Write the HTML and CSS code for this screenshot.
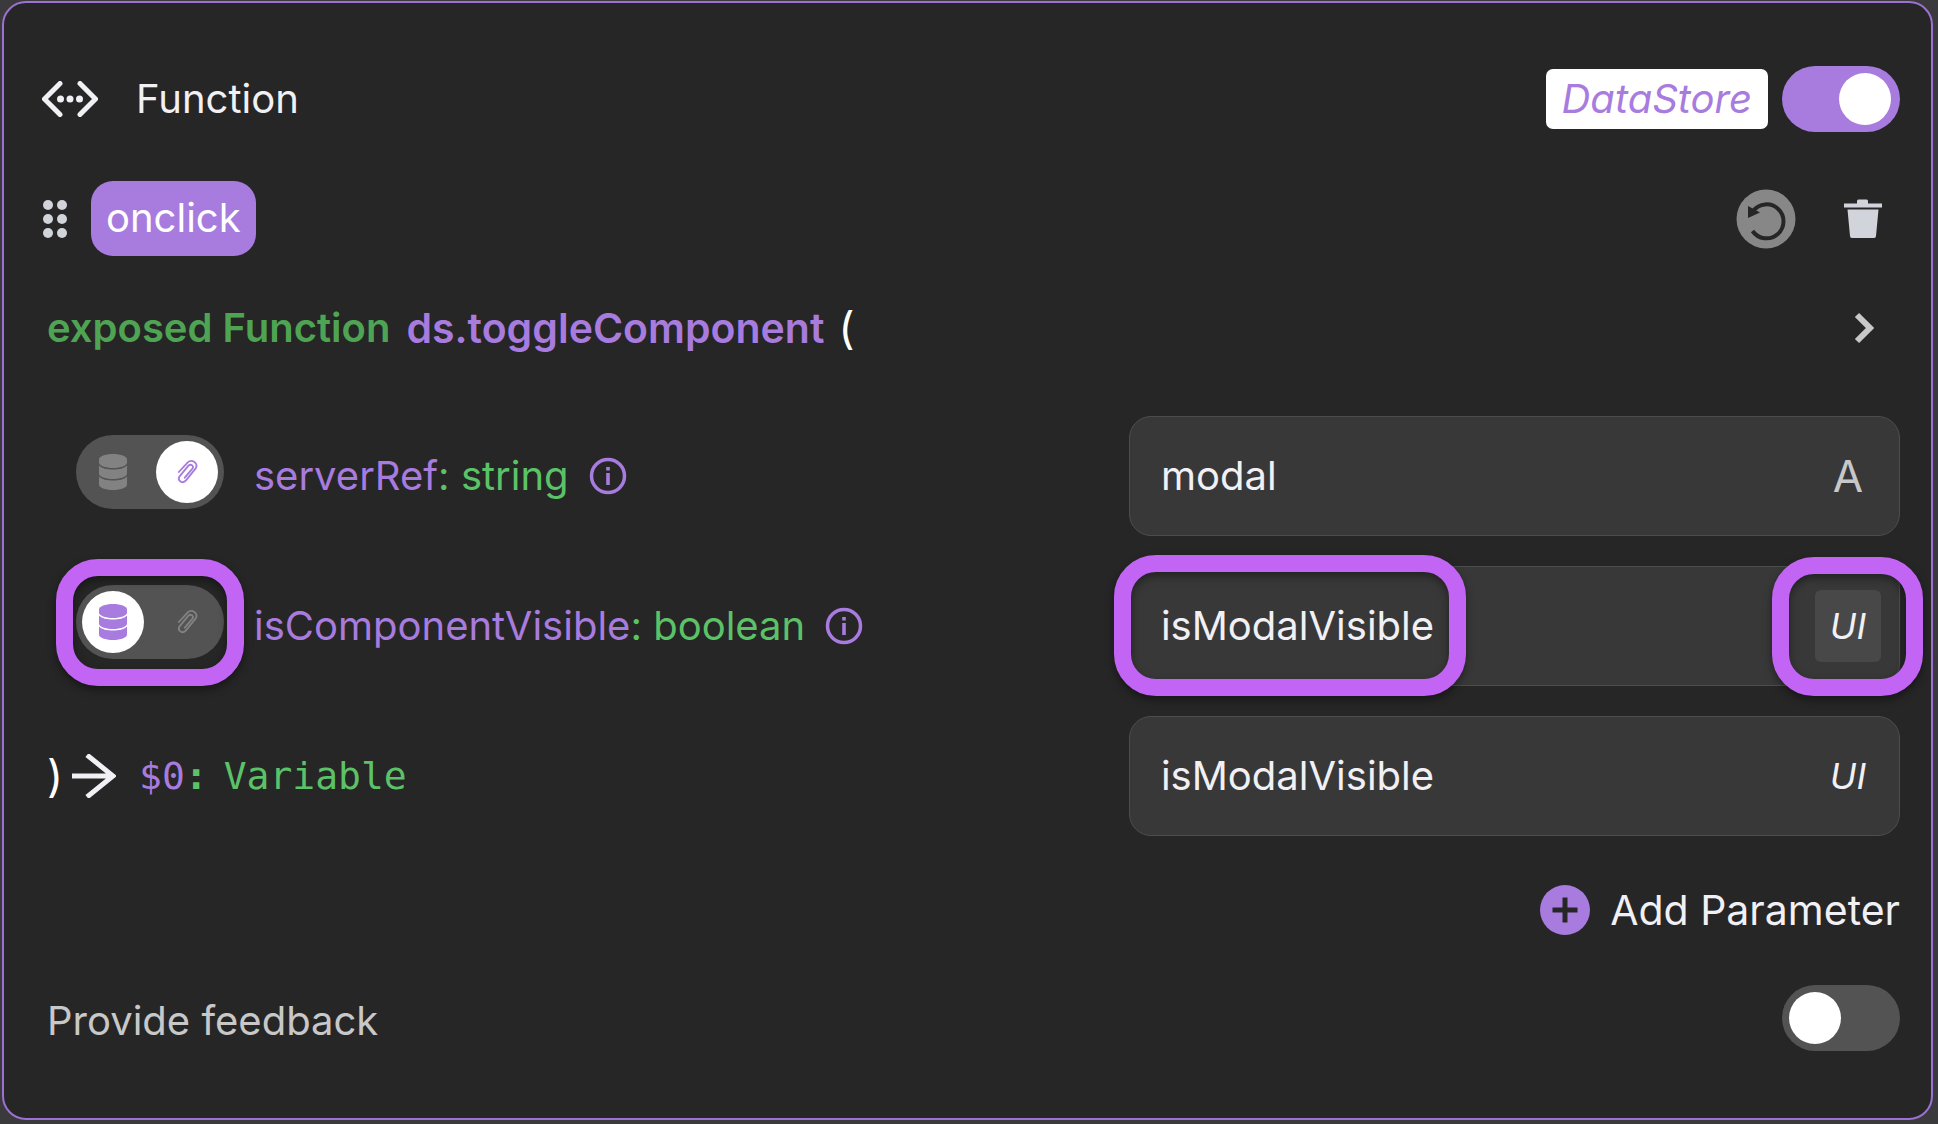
FILE: index.html
```html
<!DOCTYPE html>
<html lang="en">
<head>
<meta charset="utf-8">
<meta name="viewport" content="width=device-width, initial-scale=1">
<title>Function</title>
<link rel="stylesheet" href="styles.css">
</head>
<body>
<svg class="sprite" aria-hidden="true">
  <symbol id="database" viewBox="0 0 28 36">
    <path d="M14 0C6 0 0 2.400 0 5.500v3C0 11.600 6 14 14 14s14-2.400 14-5.500v-3C28 2.400 22 0 14 0z"/>
    <path d="M0 11.500v8C0 22.600 6 25 14 25s14-2.400 14-5.500v-8C25 14.500 20 15.500 14 15.500s-11-1-14-4z"/>
    <path d="M0 22.500v8C0 33.600 6 36 14 36s14-2.400 14-5.500v-8C25 25.500 20 26.500 14 26.500s-11-1-14-4z"/>
  </symbol>
  <symbol id="clip" viewBox="0 0 24 28">
    <path d="M2 14 11.500 3.800c4.500-4.600 12.500.7 8.700 6.600L9.800 23.200c-3.500 4.200-10 .4-7-4.500l9.700-11.600c2.500-2.500 6.300.3 4.300 3.200L8.500 20.200" fill="none" stroke="currentColor" stroke-width="2" stroke-linecap="round" stroke-linejoin="round"/>
  </symbol>
  <symbol id="info" viewBox="0 0 38 38">
    <circle cx="19" cy="19" r="16.500" fill="none" stroke="currentColor" stroke-width="3.500"/>
    <path d="M17.200 16h3.600v12h-3.600zM17.200 10h3.600v3.500h-3.600z"/>
  </symbol>
</svg>

<main class="panel">
  <header class="row">
    <svg class="icon-code" viewBox="0 0 56 36" aria-hidden="true">
      <path d="M18 2.500 2.500 18 18 33.500M38 2.500 53.500 18 38 33.500" fill="none" stroke="currentColor" stroke-width="5" stroke-linecap="round"/>
      <circle cx="18.500" cy="18" r="3.500"/><circle cx="28" cy="18" r="3.500"/><circle cx="37.500" cy="18" r="3.500"/>
    </svg>
    <h1 class="title">Function</h1>
    <label class="store-label push" for="store">DataStore</label>
    <input class="switch" type="checkbox" role="switch" id="store" checked>
  </header>

  <div class="row event">
    <svg class="icon-grip" viewBox="0 0 26 40" aria-hidden="true">
      <circle cx="6" cy="6" r="5"/><circle cx="20" cy="6" r="5"/>
      <circle cx="6" cy="20" r="5"/><circle cx="20" cy="20" r="5"/>
      <circle cx="6" cy="34" r="5"/><circle cx="20" cy="34" r="5"/>
    </svg>
    <span class="chip">onclick</span>
    <button class="icon-button push" type="button" aria-label="Reset">
      <svg class="icon-reset" viewBox="0 0 60 60" aria-hidden="true">
        <circle cx="30" cy="30" r="29.500" fill="#878787"/>
        <path d="M17 22A17 17 0 1 1 16.500 42" fill="none" stroke="#262626" stroke-width="4"/>
        <path d="M12 17v12l12-5.500z" fill="#262626"/>
      </svg>
    </button>
    <button class="icon-button trash" type="button" aria-label="Delete">
      <svg class="icon-trash" viewBox="0 0 38 40" aria-hidden="true">
        <path d="M0 4.500h13V2q0-1.500 1.500-1.500h8Q24 .5 24 2v2.500h14v4H0zM3.500 10.500h31L32 37q0 2-2 2H8q-2 0-2-2z"/>
      </svg>
    </button>
  </div>

  <div class="row signature">
    <span class="keyword">exposed Function</span>
    <span class="callee">ds.toggleComponent</span>
    <span class="paren">(</span>
    <button class="icon-button chevron push" type="button" aria-label="Expand">
      <svg class="icon-chevron" viewBox="0 0 20 32" aria-hidden="true">
        <path d="M3 3l13 13L3 29" fill="none" stroke="currentColor" stroke-width="6"/>
      </svg>
    </button>
  </div>

  <section class="params">
    <div class="param">
      <div class="param-name">
        <label class="source">
          <input class="source-input" type="checkbox" aria-label="serverRef uses a static value" checked>
          <svg class="icon-db" aria-hidden="true"><use href="#database"/></svg>
          <svg class="icon-clip" aria-hidden="true"><use href="#clip"/></svg>
        </label>
        <label class="name" for="server-ref">serverRef<span class="type">: string</span></label>
        <svg class="icon-info" aria-hidden="true"><use href="#info"/></svg>
      </div>
      <div class="field">
        <input class="field-input" type="text" id="server-ref" value="modal">
        <button class="field-kind letter" type="button">A</button>
      </div>
    </div>

    <div class="param">
      <div class="param-name">
        <label class="source">
          <input class="source-input" type="checkbox" aria-label="isComponentVisible uses a static value">
          <svg class="icon-db" aria-hidden="true"><use href="#database"/></svg>
          <svg class="icon-clip" aria-hidden="true"><use href="#clip"/></svg>
          <span class="ring ring-source"></span>
        </label>
        <label class="name" for="visible">isComponentVisible<span class="type">: boolean</span></label>
        <svg class="icon-info" aria-hidden="true"><use href="#info"/></svg>
      </div>
      <div class="field">
        <input class="field-input" type="text" id="visible" value="isModalVisible">
        <button class="field-kind active" type="button">UI</button>
        <span class="ring ring-value"></span>
        <span class="ring ring-kind"></span>
      </div>
    </div>

    <div class="param">
      <div class="result">
        <span class="paren close">)</span>
        <svg class="icon-arrow" viewBox="0 0 44 44" aria-hidden="true">
          <path d="M0 22h40M15 1l26 21-26 21" fill="none" stroke="currentColor" stroke-width="5"/>
        </svg>
        <label class="variable" for="result">$0<b class="type">:</b></label>
        <span class="variable type">Variable</span>
      </div>
      <div class="field">
        <input class="field-input" type="text" id="result" value="isModalVisible">
        <button class="field-kind" type="button">UI</button>
      </div>
    </div>
  </section>

  <button class="add" type="button">
    <svg class="icon-add" viewBox="0 0 50 50" aria-hidden="true">
      <circle cx="25" cy="25" r="25" fill="#a87bdf"/>
      <path d="M25 12.500v25M12.500 25h25" stroke="#262626" stroke-width="5"/>
    </svg>
    Add Parameter
  </button>

  <footer class="row feedback">
    <label class="feedback-label" for="feedback">Provide feedback</label>
    <input class="switch push" type="checkbox" role="switch" id="feedback">
  </footer>
</main>
</body>
</html>
```
FILE: styles.css
```css
* {
  box-sizing: border-box;
}

body {
  margin: 0;
  min-height: 100vh;
  padding: 1px 5px 3px 2px;
  background: #3a393b;
  color: #f0f0f5;
  font: 400 40px/60px Inter, "Open Sans", sans-serif;
}

svg {
  display: block;
  flex: none;
  fill: currentColor;
}

button,
input {
  margin: 0;
  padding: 0;
  border: 0;
  background: none;
  color: inherit;
  font: inherit;
}

button,
label {
  cursor: pointer;
}

.sprite {
  position: absolute;
  width: 0;
  height: 0;
}

.panel {
  padding: 63px 31px 67px 38px;
  border: 2px solid #9d70d4;
  border-radius: 24px;
  background: #262626;
}

.row {
  display: flex;
  align-items: center;
}

.push {
  margin-left: auto;
}

.icon-code {
  width: 56px;
  height: 36px;
}

.title {
  margin: 0 0 0 38px;
  font-size: 40px;
  font-weight: 400;
}

.store-label {
  padding: 0 16px;
  border-radius: 7px;
  background: #fff;
  color: #a87bdf;
  font-style: italic;
}

.switch {
  appearance: none;
  flex: none;
  width: 118px;
  height: 66px;
  padding: 7px;
  border-radius: 33px;
  background: #535353;
  cursor: pointer;
}

.switch::before {
  content: "";
  display: block;
  width: 52px;
  height: 52px;
  border-radius: 50%;
  background: #fff;
}

.switch:checked {
  background: #a87bdf;
}

.switch:checked::before {
  margin-left: 50px;
}

.store-label + .switch {
  margin-left: 14px;
}

.event {
  margin-top: 49px;
  color: #d1d5db;
}

.icon-grip {
  width: 26px;
  height: 40px;
}

.chip {
  margin-left: 23px;
  padding: 7px 15px 8px;
  border-radius: 22px;
  background: #a87bdf;
  color: #fff;
}

.icon-reset {
  width: 60px;
  height: 60px;
}

.icon-trash {
  width: 38px;
  height: 40px;
}

.trash {
  margin: 0 18px 0 48px;
}

.signature {
  margin-top: 42px;
  padding-left: 5px;
  font-weight: 600;
}

.keyword {
  color: #4fa454;
}

.callee {
  margin-left: 16px;
  color: #a87bdf;
  font-size: 41px;
}

.paren {
  margin-left: 14px;
  color: #fff;
  font-size: 44px;
  font-weight: 400;
}

.chevron {
  margin-right: 26px;
  color: #c8c8c8;
}

.icon-chevron {
  width: 20px;
  height: 32px;
}

.params {
  display: grid;
  gap: 30px;
  margin-top: 58px;
}

.param {
  display: grid;
  grid-template-columns: 585fr 415fr;
}

.param-name {
  display: flex;
  align-items: center;
  padding-left: 34px;
  color: #a87bdf;
}

.source {
  position: relative;
  display: flex;
  flex: none;
  align-items: center;
  justify-content: space-between;
  width: 148px;
  height: 74px;
  margin: 0 30px 8px 0;
  padding: 0 25px 0 23px;
  border-radius: 37px;
  background: #535353;
  color: #828282;
}

.source-input {
  appearance: none;
  position: absolute;
  top: 6px;
  left: 6px;
  width: 62px;
  height: 62px;
  border-radius: 50%;
  background: #fff;
}

.source-input:checked {
  left: 80px;
}

.icon-db {
  position: relative;
  width: 28px;
  height: 36px;
}

.icon-clip {
  position: relative;
  width: 22px;
  height: 28px;
}

.source-input:checked ~ .icon-clip,
.source-input:not(:checked) ~ .icon-db {
  color: #a87bdf;
}

.type {
  color: #5cc267;
}

.icon-info {
  width: 38px;
  height: 38px;
  margin-left: 20px;
}

.field {
  position: relative;
  display: flex;
  align-items: center;
  height: 120px;
  padding: 0 18px 0 31px;
  border: 1px solid #4d4d4d;
  border-radius: 22px;
  background: #383838;
}

.field-input {
  flex: 1;
  min-width: 0;
  outline: 0;
}

.field-kind {
  width: 66px;
  height: 72px;
  border-radius: 6px;
  font-size: 36px;
  font-style: italic;
}

.letter {
  color: #c8c8c8;
  font-size: 44px;
  font-style: normal;
}

.active {
  background: #484848;
}

.ring {
  position: absolute;
  border: 17px solid #c265f5;
  border-radius: 42px;
  filter: drop-shadow(0 4px 4px rgb(0 0 0 / 40%));
  pointer-events: none;
}

.ring-source {
  inset: -26px -20px -27px;
}

.ring-value {
  top: -12px;
  bottom: -11px;
  left: -16px;
  width: 352px;
}

.ring-kind {
  top: -10px;
  right: -24px;
  bottom: -11px;
  width: 151px;
}

.result {
  display: flex;
  align-items: center;
  padding-left: 5px;
}

.close {
  margin-left: 0;
}

.icon-arrow {
  width: 44px;
  height: 44px;
  margin: 0 23px 0 9px;
}

.variable {
  color: #a87bdf;
  font-family: "DejaVu Sans Mono", monospace;
  font-size: 38px;
}

.variable.type {
  margin-left: 16px;
  color: #5cc267;
}

.add {
  display: flex;
  align-items: center;
  gap: 20px;
  height: 50px;
  margin: 49px 0 50px auto;
  font-size: 41px;
}

.icon-add {
  width: 50px;
  height: 50px;
}

.feedback {
  padding-left: 5px;
  color: #c8c8c8;
}

.feedback-label {
  padding-top: 6px;
}
```
